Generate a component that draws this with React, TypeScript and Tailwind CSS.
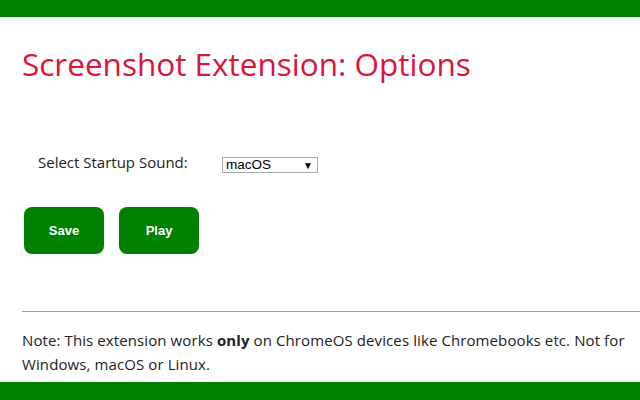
export default function App() {
  return (
    <div className="w-[640px] h-[400px] flex flex-col bg-white overflow-hidden" style={{ fontFamily: '"Open Sans", sans-serif' }}>
      <div className="h-[17px] bg-[#008000] shrink-0" />
      <div className="flex-1 pl-[22px]">
        <h1 className="mt-[26px] text-[31.5px] leading-[42px] text-[#dc143c] font-normal">
          Screenshot Extension: Options
        </h1>

        <div className="mt-[68px] ml-[16px] flex items-center h-[18px]">
          <label className="text-[15px] text-[#222] w-[184px]">Select Startup Sound:</label>
          <div className="relative w-[96px] h-[16px] mt-[6px]">
            <select
              defaultValue="macOS"
              className="block w-full h-full border border-[#a9a9a9] text-[13.5px] leading-[14px] text-black pl-[3px] appearance-none bg-white"
              style={{ fontFamily: '"Liberation Sans", Arial, sans-serif' }}
            >
              <option>macOS</option>
              <option>ChromeOS</option>
              <option>Windows</option>
            </select>
            <span className="absolute inset-y-0 right-[5px] flex items-center text-[10px] text-black pointer-events-none">▼</span>
          </div>
        </div>

        <div className="mt-[36px] flex gap-[15px] pl-[2px]">
          <button
            type="button"
            className="w-[80px] h-[47px] rounded-[8px] bg-[#008000] text-white text-[13px] font-bold"
            style={{ fontFamily: '"Liberation Sans", Arial, sans-serif' }}
          >
            Save
          </button>
          <button
            type="button"
            className="w-[80px] h-[47px] rounded-[8px] bg-[#008000] text-white text-[13px] font-bold"
            style={{ fontFamily: '"Liberation Sans", Arial, sans-serif' }}
          >
            Play
          </button>
        </div>

        <hr className="mt-[57px] border-t border-[#a0a0a0]" />

        <p className="mt-[16px] text-[15px] leading-[24px] text-[#222] tracking-[0.1px]">
          Note: This extension works <b>only</b> on ChromeOS devices like Chromebooks etc. Not for Windows, macOS or Linux.
        </p>
      </div>
      <div className="h-[18px] bg-[#008000] shrink-0" />
    </div>
  );
}
